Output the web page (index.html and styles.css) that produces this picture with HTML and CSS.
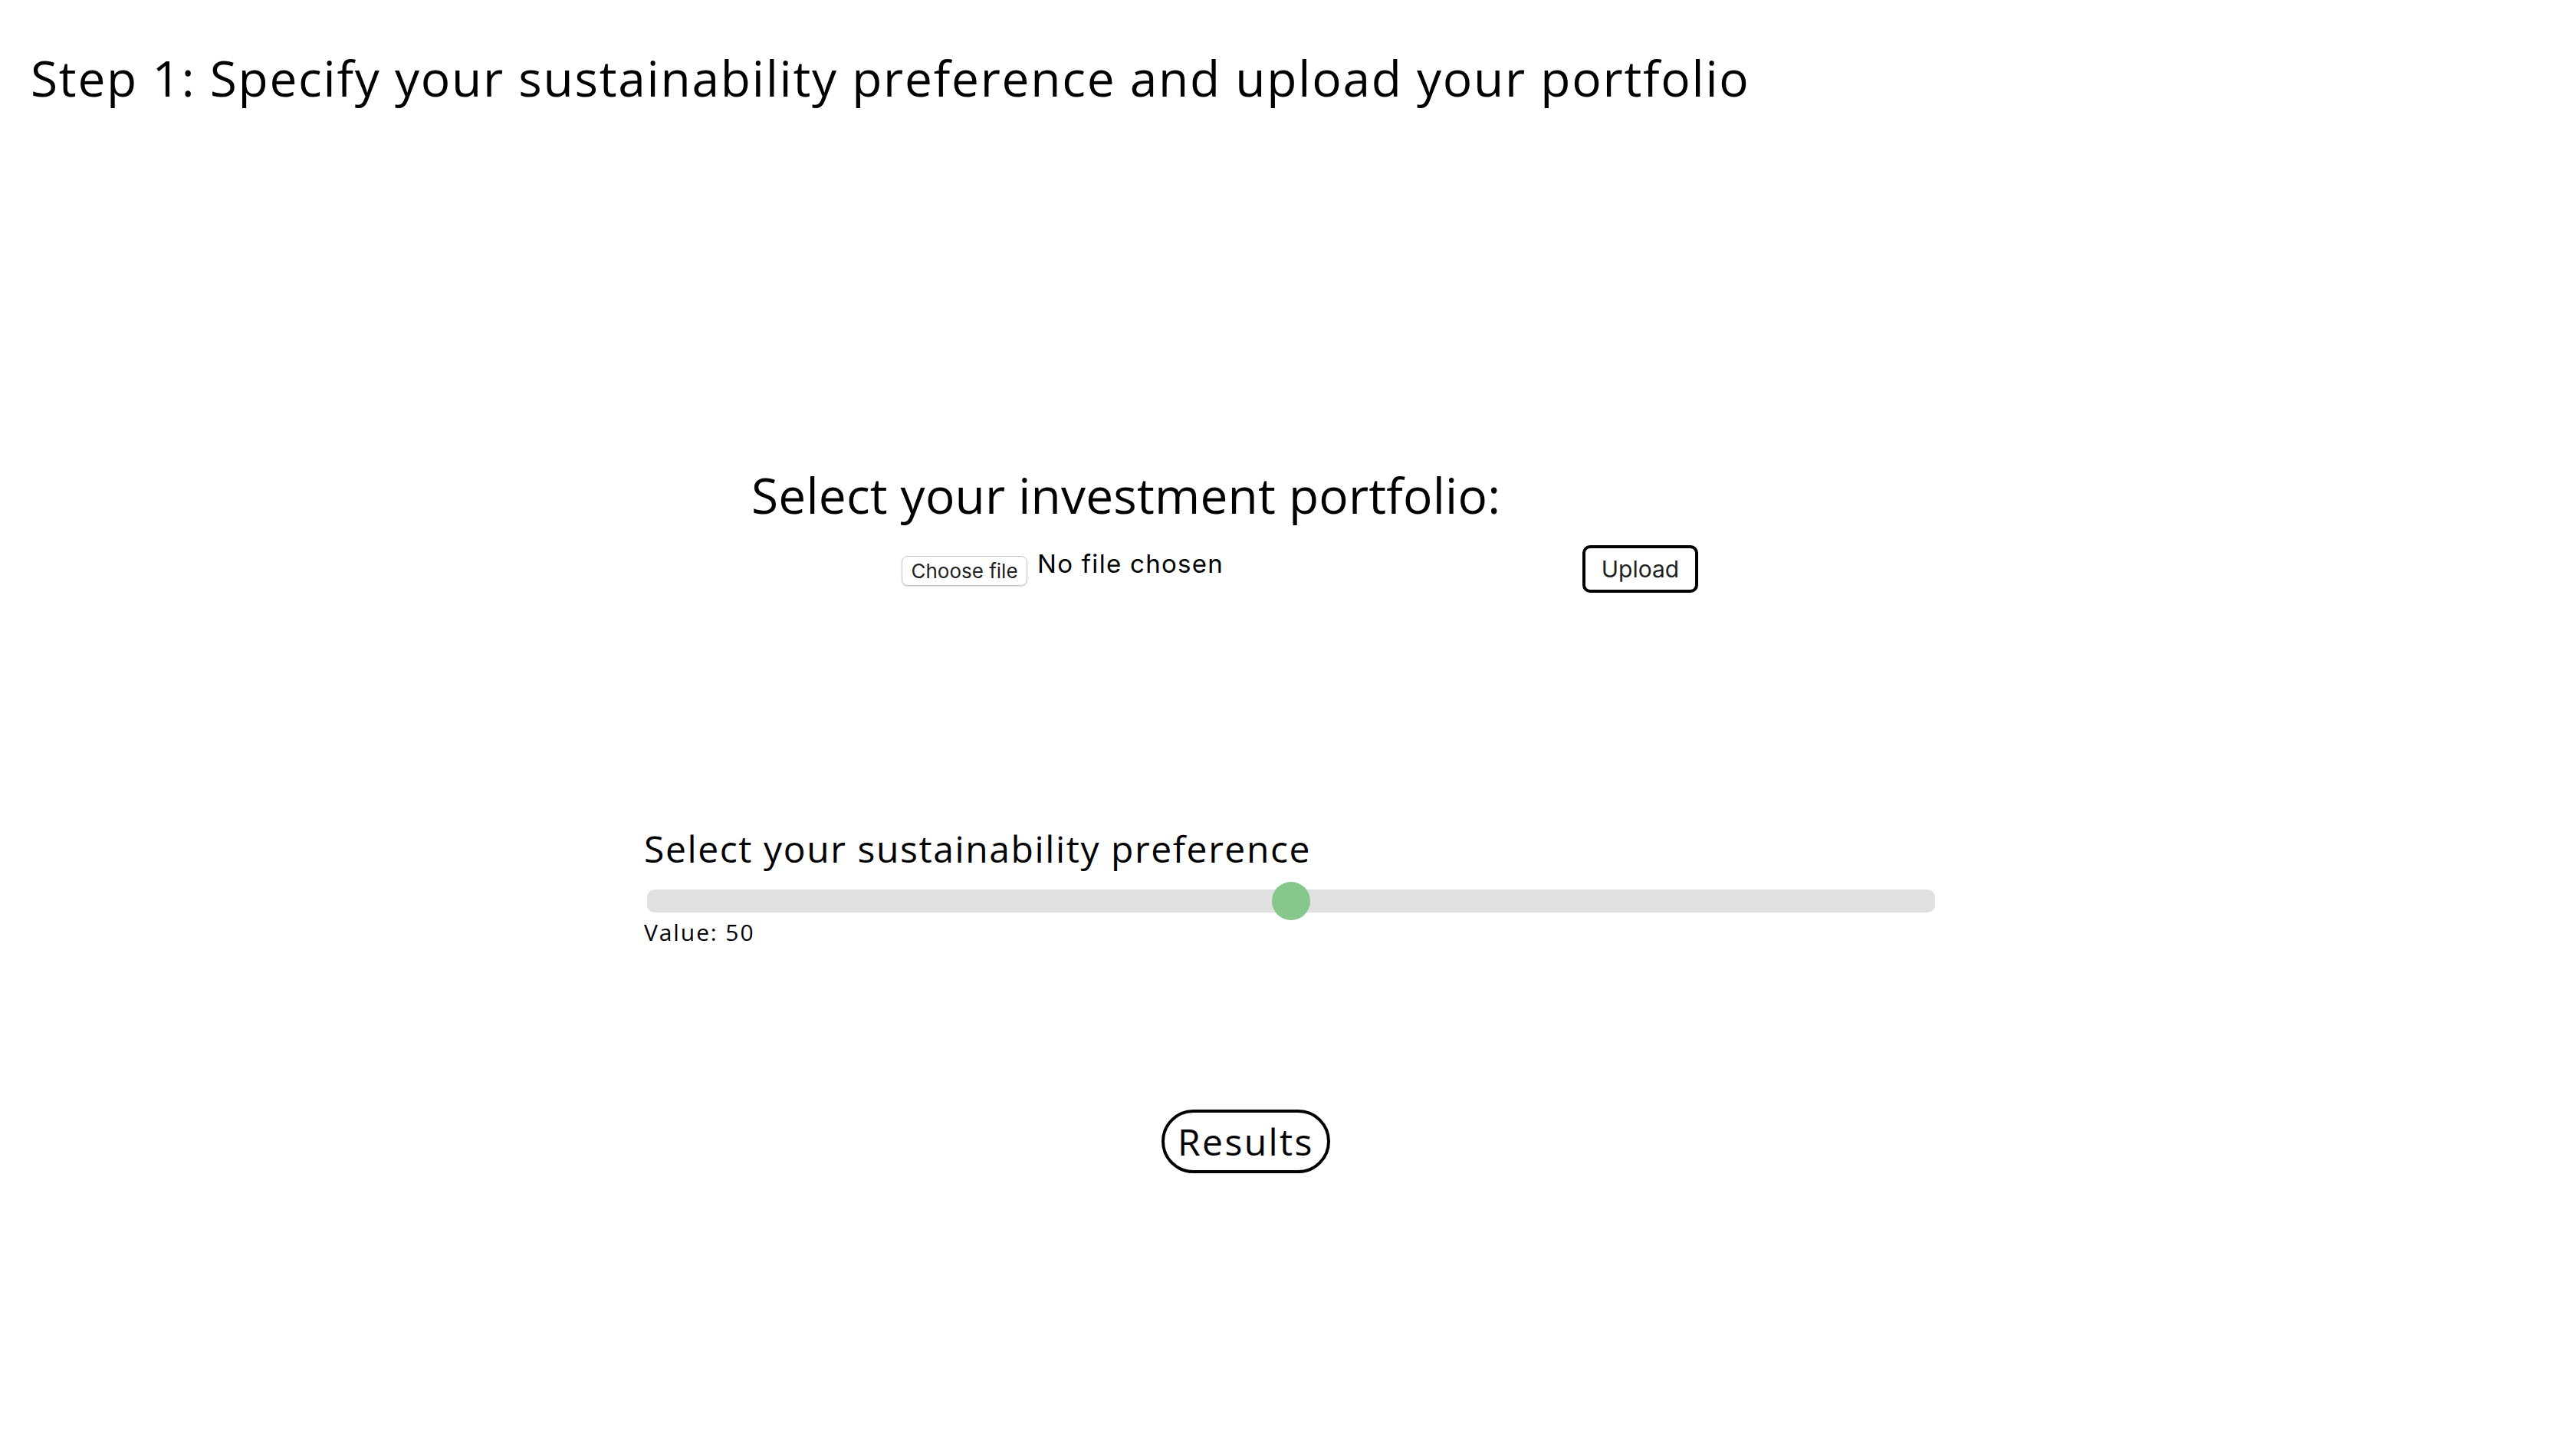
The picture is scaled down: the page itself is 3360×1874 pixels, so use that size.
FILE: index.html
```html
<!DOCTYPE html>
<html lang="en">
<head>
<meta charset="utf-8">
<title>Step 1</title>
<link rel="stylesheet" href="styles.css">
</head>
<body>
<h1 class="page-title">Step 1: Specify your sustainability preference and upload your portfolio</h1>
<main>
  <section class="upload">
    <h2 class="upload-title">Select your investment portfolio:</h2>
    <div class="file-row">
      <label class="choose-btn">Choose file<input class="file-input" type="file"></label>
      <span class="file-name">No file chosen</span>
      <button class="upload-btn" type="button">Upload</button>
    </div>
  </section>
  <section class="pref">
    <label class="pref-label" for="pref">Select your sustainability preference</label>
    <input class="slider" id="pref" type="range" min="0" max="100" value="50">
    <p class="value">Value: 50</p>
  </section>
  <div class="actions">
    <button class="results-btn" type="button">Results</button>
  </div>
</main>
</body>
</html>
```

FILE: styles.css
```css
* { box-sizing: border-box; }

body {
  margin: 0;
  font-family: "Open Sans", sans-serif;
  color: #000;
  background: #fff;
}

.page-title {
  margin: 0;
  padding: 70px 0 0 40px;
  font-size: 64px;
  line-height: 64px;
  font-weight: 400;
  letter-spacing: 1.75px;
  white-space: nowrap;
}

.upload {
  margin-top: 480px;
}

.upload-title {
  margin: 0;
  padding-left: 980px;
  font-size: 64px;
  line-height: 64px;
  font-weight: 400;
  letter-spacing: 0.2px;
}

.file-row {
  display: flex;
  align-items: flex-start;
  margin-top: 33px;
  padding-left: 1176px;
  height: 62px;
}

.choose-btn {
  margin-top: 14px;
  width: 164px;
  height: 39px;
  display: flex;
  align-items: center;
  justify-content: center;
  border: 1px solid #c8c8c8;
  border-radius: 8px;
  background: #fff;
  box-shadow: 0 1px 2px rgba(0, 0, 0, 0.15);
  font-family: "Inter", sans-serif;
  font-size: 26px;
  color: #222;
}

.file-input {
  display: none;
}

.file-name {
  margin: 8px 0 0 13px;
  width: 242px;
  white-space: nowrap;
  font-family: "Inter", sans-serif;
  font-size: 33px;
  line-height: 32px;
  letter-spacing: 1.3px;
}

.upload-btn {
  margin-left: 469px;
  width: 151px;
  height: 62px;
  padding: 0;
  border: 4px solid #000;
  border-radius: 10px;
  background: #fff;
  font-family: "Inter", sans-serif;
  font-size: 30px;
  color: #222;
}

.pref {
  margin-top: 310px;
}

.pref-label {
  display: block;
  padding-left: 840px;
  font-size: 48px;
  line-height: 48px;
  letter-spacing: 1.6px;
}

.slider {
  display: block;
  margin: 19px 0 0 844px;
  width: 1680px;
  height: 50px;
  padding: 0;
  -webkit-appearance: none;
  appearance: none;
  background: transparent;
}

.slider::-webkit-slider-runnable-track {
  height: 30px;
  background: #e0e0e0;
  border-radius: 10px;
}

.slider::-webkit-slider-thumb {
  -webkit-appearance: none;
  appearance: none;
  width: 50px;
  height: 50px;
  margin-top: -10px;
  border-radius: 50%;
  background: #85c78a;
}

.value {
  margin: 1px 0 0;
  padding-left: 840px;
  font-size: 30px;
  line-height: 30px;
  letter-spacing: 1.9px;
}

.actions {
  margin-top: 216px;
  padding-left: 1515px;
}

.results-btn {
  display: block;
  width: 220px;
  height: 83px;
  padding: 0;
  border: 4px solid #000;
  border-radius: 42px;
  background: #fff;
  font-family: "Open Sans", sans-serif;
  font-size: 48px;
  letter-spacing: 2.4px;
  color: #000;
}
```
